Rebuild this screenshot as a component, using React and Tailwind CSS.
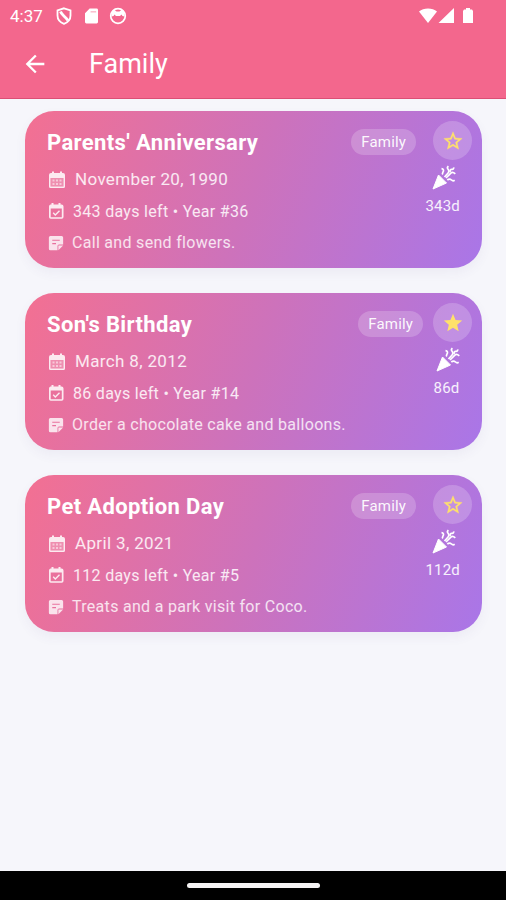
import { MdArrowBack, MdStar, MdStarOutline } from "react-icons/md";

const events = [
  { title: "Parents' Anniversary", date: "November 20, 1990", left: "343 days left • Year #36", note: "Call and send flowers.", days: "343d", starred: false },
  { title: "Son's Birthday", date: "March 8, 2012", left: "86 days left • Year #14", note: "Order a chocolate cake and balloons.", days: "86d", starred: true },
  { title: "Pet Adoption Day", date: "April 3, 2021", left: "112 days left • Year #5", note: "Treats and a park visit for Coco.", days: "112d", starred: false },
];

const CalendarIcon = () => (
  <svg viewBox="0 0 20 20" className="size-5 shrink-0" fill="currentColor">
    <path fillRule="evenodd" d="M4 3h1V1.500h2V3h6V1.500h2V3h1a2 2 0 0 1 2 2v11.500a1.500 1.500 0 0 1-1.500 1.500h-13A1.500 1.500 0 0 1 2 16.500V5a2 2 0 0 1 2-2Zm-.5 5v8.500h13V8h-13Z" />
    <path d="M3.500 8h13v8.500h-13z" fillOpacity="0.25" />
    <path d="M5.500 9.500h2v2h-2zM9 9.500h2v2H9zM12.500 9.500h2v2h-2zM5.500 13h2v2h-2zM9 13h2v2H9zM12.500 13h2v2h-2z" fillOpacity="0.6" />
  </svg>
);

const CheckIcon = () => (
  <svg viewBox="0 0 19 19" className="size-[19px] shrink-0" fill="currentColor">
    <path fillRule="evenodd" d="M3.500 2.500h1V1h2v1.500h5V1h2v1.500h1A2 2 0 0 1 16.500 4.500V15a1.800 1.800 0 0 1-1.800 1.800H3.800A1.800 1.800 0 0 1 2 15V4.500a2 2 0 0 1 1.500-2ZM3.700 6.500v8.700h11.100V6.500H3.700Z" />
    <path d="m6.200 10.800 2.100 2.100 4.200-4.200" fill="none" stroke="currentColor" strokeWidth="1.400" />
  </svg>
);

const NoteIcon = () => (
  <svg viewBox="0 0 24 24" className="size-[18px] shrink-0" fill="currentColor">
    <path fillRule="evenodd" d="M4.500 2.500h15A2 2 0 0 1 21.500 4.500V14H16a2 2 0 0 0-2 2v5.500H4.500a2 2 0 0 1-2-2v-15a2 2 0 0 1 2-2ZM7 7.500V9h10V7.500H7ZM7 12v1.500h5V12H7Z" />
    <path d="M15.200 15.200h6.300l-6.300 6.300z" />
  </svg>
);

const PopperIcon = () => (
  <svg viewBox="0 0 24 24" className="ml-[3px] h-[25px] w-6" fill="none" stroke="currentColor" strokeWidth="1.700">
    <path d="m6.500 9.500 8 8L1 23.500z" fill="currentColor" stroke="currentColor" strokeWidth="1" strokeLinejoin="round" />
    <path d="M9.500 3.200c2 .2 2.600 1.700 1.500 3.200-.7 1-.8 1.800-.2 2.600" />
    <path d="m12.500 11.500 3.600-4c1.500-1.700 1-2.800-.2-4-.8-.9-.6-1.800.5-2.800" />
    <path d="m14 12.500 4.600-4.700c1.700-1.700 3-.9 4.700.6" />
    <path d="M15.300 14.500c1.500-1.300 3-1.200 4.200 0 1 1 2 1 3.200.2" />
    <path d="M18.300 6.500c-.7-1.500.2-2.700 1.500-2.600 1.400.1 2-.7 1.900-2" />
  </svg>
);

const StatusBar = () => (
  <div className="flex h-8 items-center pl-[10px] pr-[32px]">
    <span className="w-[46px] text-[17px] leading-8">4:37</span>
    <svg viewBox="0 0 16 18" className="h-[18px] w-4" fill="none" stroke="currentColor" strokeWidth="1.800">
      <path d="M8 1.300 14.500 3.500v5c0 4-3 7-6.500 8.300C4.500 15.500 1.500 12.500 1.500 8.500v-5L8 1.300Z" />
      <path d="M4.500 4.500c1 3.500 5 5 7.500 9" strokeWidth="2.800" />
    </svg>
    <svg viewBox="0 0 14 16" className="ml-[13px] h-4 w-[13px]" fill="currentColor">
      <path d="M5 0h7.500A1.500 1.500 0 0 1 14 1.500v13a1.500 1.500 0 0 1-1.500 1.500h-11A1.500 1.500 0 0 1 0 14.500V5l5-5Z" />
      <path d="M6 2.800h6v1.400H6z" fill="#f3678d" fillOpacity="0.5" />
    </svg>
    <svg viewBox="0 0 18 18" className="ml-[11px] size-[18px]" fill="none" stroke="currentColor">
      <circle cx="9" cy="9" r="7.300" strokeWidth="1.700" />
      <path d="M2.500 5 5 2.500l2.500 2h3l2.500-2L15.500 5v4.500L13.500 9l-1-1.500L11 9H7L5.500 7.500 4.500 9l-2 .5z" fill="currentColor" stroke="none" />
    </svg>
    <svg viewBox="0 0 56 17" className="ml-auto h-[17px] w-14" fill="currentColor">
      <path d="M1 3.500C5.500-.5 14.500-.5 19 3.500L10 15z" />
      <path d="M36 0v15H20.500zM46 1.500h2V0h4v1.500h2L55 3v12H45V3z" />
    </svg>
  </div>
);

const EventCard = ({ event }) => (
  <div className="flex h-[157px] justify-between rounded-[29px] bg-[linear-gradient(109deg,#f37092_0%,#cd72bb_50%,#a976e8_100%)] pl-[22px] pr-[10px] text-white shadow-[0_5px_12px_rgba(80,60,130,0.06)]">
    <div className="flex flex-col pt-4">
      <h2 className="whitespace-nowrap text-[22px] font-bold leading-8 tracking-[0.37px]">{event.title}</h2>
      <div className="mt-[5px] flex h-8 items-center gap-[8px] text-[17px] tracking-[0.35px] text-white/85">
        <CalendarIcon />
        <span>{event.date}</span>
      </div>
      <div className="flex h-[31px] items-center gap-[7px] text-[16px] tracking-[0.3px] text-white/85">
        <CheckIcon />
        <span>{event.left}</span>
      </div>
      <div className="flex h-8 items-center gap-[7px] text-[16px] tracking-[0.3px] text-white/80">
        <NoteIcon />
        <span>{event.note}</span>
      </div>
    </div>
    <div className="flex flex-col items-end pt-[10px]">
      <div className={event.starred ? "flex items-center gap-[10px]" : "flex items-center gap-[17px]"}>
        <span className="mt-[3px] flex h-[26px] items-center rounded-full bg-white/20 px-[10px] text-[15px] tracking-[0.15px] text-white/95">Family</span>
        <button className="flex size-[39px] items-center justify-center rounded-full bg-white/20 text-[#ffe16a]">
          {event.starred ? <MdStar className="size-[22px]" /> : <MdStarOutline className="size-[22px] stroke-current stroke-[0.4]" />}
        </button>
      </div>
      <div className="mr-[12px] mt-[5px] flex flex-col items-center">
        <PopperIcon />
        <span className="mt-[6px] text-[15px] leading-5 tracking-[0.2px] text-white/90">{event.days}</span>
      </div>
    </div>
  </div>
);

export default function App() {
  return (
    <div className="flex h-[900px] w-[506px] flex-col overflow-hidden bg-[#f6f6fb] font-['Roboto',sans-serif]">
      <header className="h-[99px] shrink-0 border-b border-[#dc4f75] bg-[#f3678d] text-white">
        <StatusBar />
        <div className="flex h-16 items-center pl-[21px]">
          <MdArrowBack className="size-[28px]" />
          <h1 className="ml-10 text-[27px] leading-8">Family</h1>
        </div>
      </header>
      <main className="flex flex-1 flex-col gap-[25px] pl-[25px] pr-6 pt-3">
        {events.map((event) => (
          <EventCard key={event.title} event={event} />
        ))}
      </main>
      <footer className="flex h-[29px] shrink-0 items-center justify-center bg-black">
        <div className="h-[5px] w-[133px] rounded-full bg-[#f5f3f4]" />
      </footer>
    </div>
  );
}
